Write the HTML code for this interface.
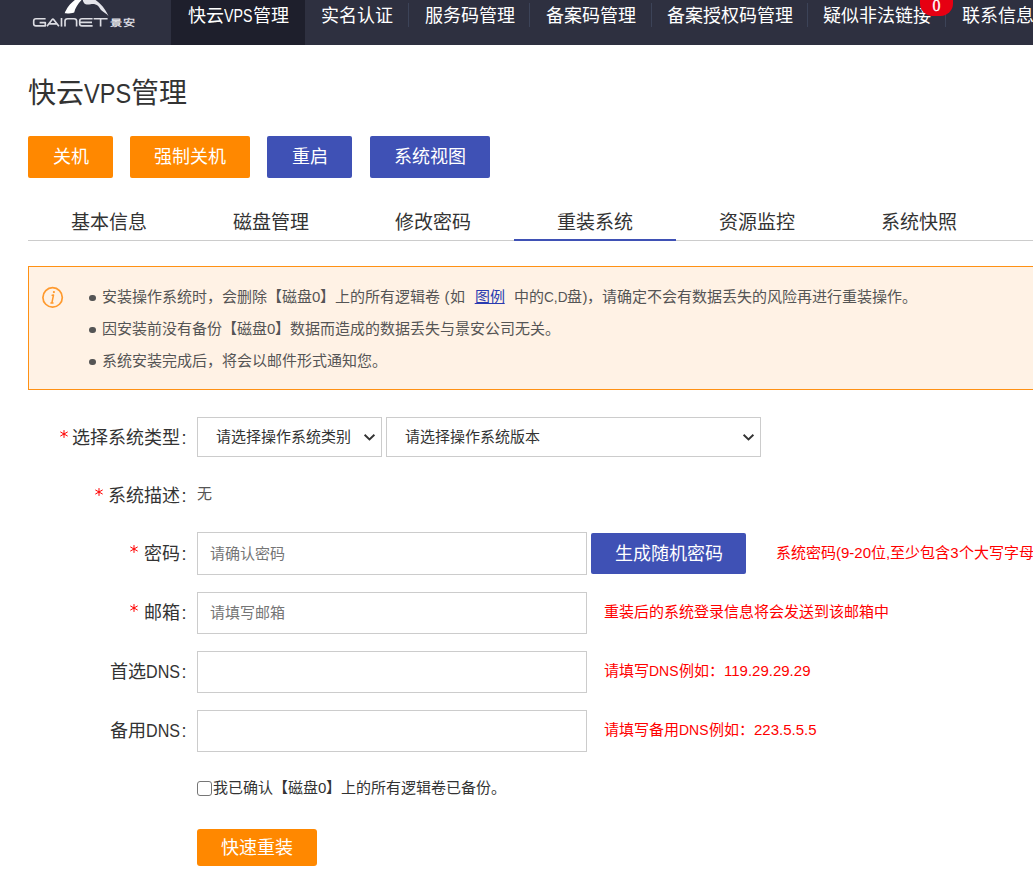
<!DOCTYPE html>
<html lang="zh-CN">
<head>
<meta charset="utf-8">
<title>快云VPS管理</title>
<style>
*{box-sizing:border-box;margin:0;padding:0}
html,body{width:1033px;height:870px;overflow:hidden;background:#fff}
body{font-family:"Liberation Sans",sans-serif;color:#333;position:relative}
.abs{position:absolute;white-space:nowrap}
/* nav */
#nav{left:0;top:0;width:1033px;height:45px;background:#2e3040;overflow:hidden}
#nav .act{left:171px;top:0;width:134px;height:45px;background:#1e1f2c}
#nav .it{top:0;height:32px;line-height:32px;font-size:18px;color:#fff}
#nav .sep{top:3px;width:1px;height:24px;background:#3c4358}
#badge{left:920px;top:-14px;width:33px;height:30px;border-radius:12.5px;-webkit-text-stroke:.3px #fff;background:#e60012;color:#fff;font-size:16px;line-height:30px;text-align:center;font-family:"Liberation Serif",serif}
#badge span{position:absolute;left:0;width:33px;top:10px;line-height:20px}
.nx{display:inline-block;transform-origin:0 50%;white-space:nowrap}
/* title */
#title{left:28px;top:73px;font-size:28px;line-height:42px;color:#333;font-weight:300}
/* buttons */
.btn{height:42px;line-height:42px;border-radius:2px;color:#fff;font-size:18px;text-align:center}
.or{background:#ff8800}
.bl{background:#3f51b5}
/* tabs */
#tabline{left:28px;top:240px;width:1005px;height:1px;background:#ccc}
.tab{top:205px;width:162px;height:36px;line-height:36px;text-align:center;font-size:19px;color:#333}
#tabact{left:514px;top:239px;width:162px;height:2px;background:#3f51b5}
/* alert */
#alert{left:28px;top:266px;width:1040px;height:124px;background:#fff2e5;border:1px solid #ff9114}
.al{left:102px;font-size:15px;line-height:32px;height:32px;color:#555}
.al a{color:#2a3bb0;text-decoration:underline;margin:0 5px 0 6px}
.dot{left:89.3px;width:6.6px;height:6.6px;border-radius:50%;background:#555}
/* form */
.lab{left:0;width:186.5px;text-align:right;font-size:18px;height:40px;line-height:40px;color:#333}
.lab b{font-weight:normal;margin-left:1px}
.box{background:#fff;border:1px solid #ccc}
.ph{font-size:15px;color:#757575}
.hint{font-size:15px;color:#f00;line-height:24px;height:24px}
</style>
</head>
<body>
<div id="nav" class="abs">
  <div class="act abs"></div>
  <svg class="abs" style="left:0;top:0" width="160" height="45" viewBox="0 0 160 45">
    <path d="M64.7 13.3 C66.3 8.5 70.8 2.5 76.3 -1 L82.6 -1 C78.2 3 75.2 8 74.2 12.5 C71 13.5 67 13.6 64.7 13.3 Z" fill="#fff"/>
    <path d="M82.6 -1 L94 -1 C99.8 2.5 104.8 7.8 108.6 16.2 C106.2 13.6 103.6 12.2 101.6 10.6 C100 9.2 99.6 7.2 97.9 5.7 C96 4.2 93.2 3.5 90.6 4.2 C88 4.9 85.6 4.7 84.4 3.6 C83.4 2.5 82.9 1 82.6 -1 Z" fill="#e4e4ea"/>
    <g fill="none" stroke="#dcdce2" stroke-width="1.65" stroke-linejoin="round">
      <path d="M45.6 18.7 H36 Q33.7 18.7 33.7 20.9 V23.7 Q33.7 25.9 36 25.9 H45.3 V22.6 H39.6"/>
      <path d="M47 26.2 L52.2 19.4 Q52.9 18.5 53.6 19.4 L58.9 26.2 M49.3 23.9 H56.6"/>
      <path d="M61.5 18 V26.6"/>
      <path d="M65 26.6 V21.1 Q65 18.7 67.5 18.7 H74.1 Q76.6 18.7 76.6 21.1 V26.6"/>
      <path d="M92.6 18.7 H82 Q79.7 18.7 79.7 20.9 V23.7 Q79.7 25.9 82 25.9 H92.6 M80 22.3 H92"/>
      <path d="M93.6 18.7 H107.6 M100.6 18.7 V26.6"/>
    </g>
    <text transform="translate(110.2 26.2) scale(1 .72)" font-family="Liberation Sans, sans-serif" font-size="12.2" fill="#dcdce2" font-weight="bold">景安</text>
  </svg>
  <div class="it abs" style="left:188px">快云<span class="nx" style="width:28.5px;transform:scaleX(.79)">VPS</span>管理</div>
  <div class="it abs" style="left:321px">实名认证</div>
  <div class="sep abs" style="left:408px"></div>
  <div class="it abs" style="left:425px">服务码管理</div>
  <div class="sep abs" style="left:529px"></div>
  <div class="it abs" style="left:546px">备案码管理</div>
  <div class="sep abs" style="left:651px"></div>
  <div class="it abs" style="left:667px">备案授权码管理</div>
  <div class="sep abs" style="left:807px"></div>
  <div class="it abs" style="left:823px">疑似非法链接</div>
  <div class="sep abs" style="left:945px"></div>
  <div class="it abs" style="left:962px">联系信息</div>
  <div id="badge" class="abs"><span>0</span></div>
</div>

<div id="title" class="abs">快云<span class="nx" style="width:47px;transform:scaleX(.84)">VPS</span>管理</div>

<div class="btn or abs" style="left:28px;top:136px;width:85px">关机</div>
<div class="btn or abs" style="left:130px;top:136px;width:120px">强制关机</div>
<div class="btn bl abs" style="left:267px;top:136px;width:85px">重启</div>
<div class="btn bl abs" style="left:370px;top:136px;width:120px">系统视图</div>

<div id="tabline" class="abs"></div>
<div class="tab abs" style="left:28px">基本信息</div>
<div class="tab abs" style="left:190px">磁盘管理</div>
<div class="tab abs" style="left:352px">修改密码</div>
<div class="tab abs" style="left:514px">重装系统</div>
<div class="tab abs" style="left:676px">资源监控</div>
<div class="tab abs" style="left:838px">系统快照</div>
<div id="tabact" class="abs"></div>

<div id="alert" class="abs"></div>
<svg class="abs" style="left:40px;top:285px" width="26" height="26" viewBox="40 285 26 26">
  <circle cx="52.6" cy="297.4" r="9.7" fill="none" stroke="#ff9a2e" stroke-width="1.7"/>
  <circle cx="53.9" cy="292.1" r="1.1" fill="#ff9a2e"/>
  <path d="M52.2 295.3 L53.5 295 L51.9 302.9 M50.9 303.1 H53" stroke="#ff9a2e" stroke-width="1.5" fill="none" stroke-linecap="round" stroke-linejoin="round"/>
</svg>
<div class="dot abs" style="top:294.6px"></div>
<div class="dot abs" style="top:326.6px"></div>
<div class="dot abs" style="top:358.6px"></div>
<div class="al abs" style="top:281px">安装操作系统时，会删除【磁盘0】上的所有逻辑卷 (如 <a>图例</a> 中的<span class="nx" style="width:23.6px;transform:scaleX(.91)">C,D</span>盘)，请确定不会有数据丢失的风险再进行重装操作。</div>
<div class="al abs" style="top:313px">因安装前没有备份【磁盘0】数据而造成的数据丢失与景安公司无关。</div>
<div class="al abs" style="top:345px">系统安装完成后，将会以邮件形式通知您。</div>

<!-- form -->
<svg class="abs" style="left:59.1px;top:428.7px" width="10" height="10" viewBox="-5 -5 10 10"><path d="M0 -3.9 V3.9 M-3.7 -2.1 L3.7 2.1 M-3.7 2.1 L3.7 -2.1" stroke="#f00" stroke-width="1.0" fill="none"/></svg>
<div class="lab abs" style="top:418px">选择系统类型<b>:</b></div>
<div class="box abs" style="left:197px;top:417px;width:185px;height:40px"></div>
<div class="abs" style="left:216px;top:417px;line-height:40px;font-size:15px;color:#333">请选择操作系统类别</div>
<svg class="abs" style="left:363.3px;top:433.4px" width="13" height="9" viewBox="0 0 13 9"><path d="M1.6 1.7 L6.5 6.4 L11.4 1.7" stroke="#333" stroke-width="1.9" fill="none"/></svg>
<div class="box abs" style="left:386px;top:417px;width:375px;height:40px"></div>
<div class="abs" style="left:405px;top:417px;line-height:40px;font-size:15px;color:#333">请选择操作系统版本</div>
<svg class="abs" style="left:742.3px;top:433.4px" width="13" height="9" viewBox="0 0 13 9"><path d="M1.6 1.7 L6.5 6.4 L11.4 1.7" stroke="#333" stroke-width="1.9" fill="none"/></svg>

<svg class="abs" style="left:94.3px;top:486.5px" width="10" height="10" viewBox="-5 -5 10 10"><path d="M0 -3.9 V3.9 M-3.7 -2.1 L3.7 2.1 M-3.7 2.1 L3.7 -2.1" stroke="#f00" stroke-width="1.0" fill="none"/></svg>
<div class="lab abs" style="top:476px">系统描述<b>:</b></div>
<div class="abs" style="left:197px;top:474px;line-height:40px;font-size:15px;color:#555">无</div>

<svg class="abs" style="left:129.0px;top:544.2px" width="10" height="10" viewBox="-5 -5 10 10"><path d="M0 -3.9 V3.9 M-3.7 -2.1 L3.7 2.1 M-3.7 2.1 L3.7 -2.1" stroke="#f00" stroke-width="1.0" fill="none"/></svg>
<div class="lab abs" style="top:534px">密码<b>:</b></div>
<div class="box abs" style="left:197px;top:532px;width:390px;height:43px"></div>
<div class="ph abs" style="left:210px;top:533px;line-height:42px">请确认密码</div>
<div class="btn bl abs" style="left:591px;top:533px;width:155px;height:41px;line-height:43px">生成随机密码</div>
<div class="hint abs" style="left:776px;top:541px">系统密码(9-20位,至少包含3个大写字母,3个小写字母</div>

<svg class="abs" style="left:129.0px;top:603.0px" width="10" height="10" viewBox="-5 -5 10 10"><path d="M0 -3.9 V3.9 M-3.7 -2.1 L3.7 2.1 M-3.7 2.1 L3.7 -2.1" stroke="#f00" stroke-width="1.0" fill="none"/></svg>
<div class="lab abs" style="top:593px">邮箱<b>:</b></div>
<div class="box abs" style="left:197px;top:592px;width:390px;height:42px"></div>
<div class="ph abs" style="left:210px;top:592px;line-height:42px">请填写邮箱</div>
<div class="hint abs" style="left:604px;top:600px">重装后的系统登录信息将会发送到该邮箱中</div>

<div class="lab abs" style="top:652px">首选<span class="nx" style="width:34px;transform:scaleX(.895)">DNS</span><b>:</b></div>
<div class="box abs" style="left:197px;top:651px;width:390px;height:42px"></div>
<div class="hint abs" style="left:604px;top:659px">请填写<span class="nx" style="width:30px;transform:scaleX(.93)">DNS</span>例如：119.29.29.29</div>

<div class="lab abs" style="top:711px">备用<span class="nx" style="width:34px;transform:scaleX(.895)">DNS</span><b>:</b></div>
<div class="box abs" style="left:197px;top:710px;width:390px;height:42px"></div>
<div class="hint abs" style="left:604px;top:718px">请填写备用<span class="nx" style="width:30px;transform:scaleX(.93)">DNS</span>例如：223.5.5.5</div>

<div class="abs" style="left:197px;top:781px;width:15px;height:15px;border:1px solid #767676;border-radius:3px;background:#fff"></div>
<div class="abs" style="left:213px;top:776px;line-height:24px;font-size:15px;color:#333">我已确认【磁盘0】上的所有逻辑卷已备份。</div>

<div class="btn or abs" style="left:197px;top:829px;width:120px;height:37px;line-height:39px;border-radius:3px">快速重装</div>
</body>
</html>
